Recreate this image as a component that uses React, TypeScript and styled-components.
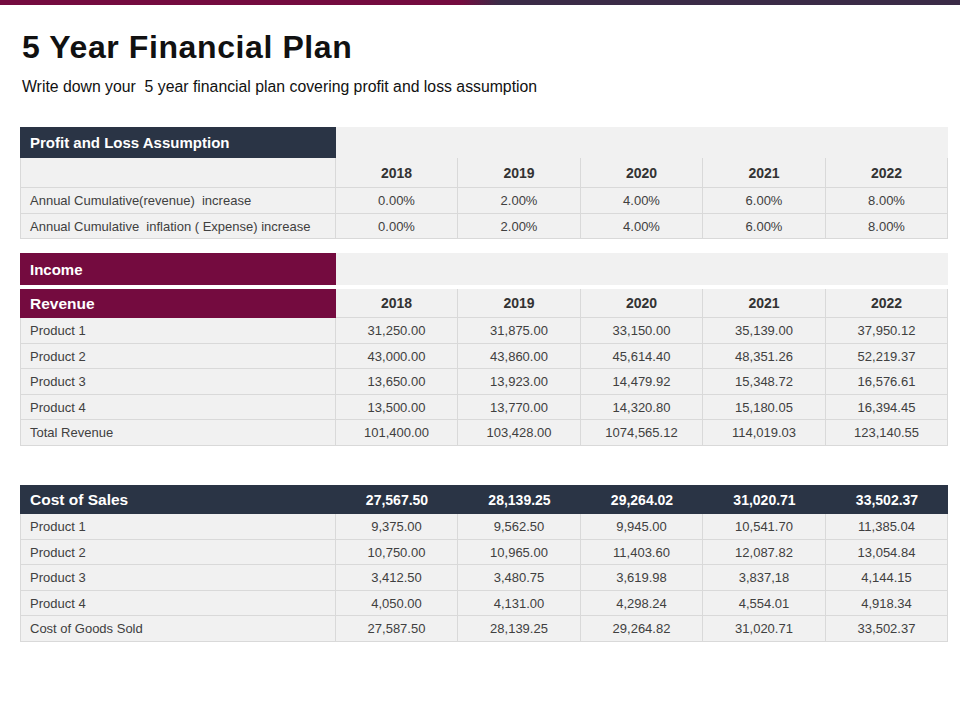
import React from "react";
import styled, {createGlobalStyle} from "styled-components";

const GlobalStyle = createGlobalStyle`
  html, body {
    margin: 0;
    padding: 0;
    background: #ffffff;
  }
  body {
    font-family: "Liberation Sans", Arial, sans-serif;
  }
`;

const MAROON = "#740b3f";
const NAVY = "#2a3445";
const CELL = "#f1f1f1";
const LINE = "#d9d9d9";

const Page = styled.div`
  width: 960px;
  height: 720px;
  overflow: hidden;
  background: #fff;
`;

const TopBar = styled.div`
  height: 5px;
  background: linear-gradient(90deg, ${MAROON} 0%, ${MAROON} 48%, #3b2b47 52%, #3b2b47 100%);
`;

const Content = styled.div`
  padding: 0 12px 0 20px;
`;

const Title = styled.h1`
  margin: 24px 0 0 2px;
  font-family: "Liberation Sans", Arial, sans-serif;
  font-weight: 700;
  font-size: 32px;
  line-height: 36px;
  color: #111;
  letter-spacing: 0.6px;
`;

const Subtitle = styled.p`
  margin: 13px 0 0 2px;
  font-size: 15.8px;
  line-height: 18px;
  color: #111;
  white-space: pre;
`;

const Table = styled.div<{ $top: number }>`
  margin-top: ${p => p.$top}px;
  display: grid;
  grid-template-columns: 316px 122px 123px 122px 123px 122px;
  width: 928px;
`;

const Cell = styled.div<{ $h: number; $bold?: boolean; $left?: boolean }>`
  height: ${p => p.$h}px;
  box-sizing: border-box;
  background: ${CELL};
  border-right: 1px solid ${LINE};
  border-bottom: 1px solid ${LINE};
  border-left: ${p => (p.$left ? `1px solid ${LINE}` : "none")};
  display: flex;
  align-items: center;
  justify-content: ${p => (p.$left ? "flex-start" : "center")};
  padding-left: ${p => (p.$left ? "9px" : "0")};
  font-size: ${p => (p.$bold ? "14px" : "13px")};
  font-weight: ${p => (p.$bold ? 700 : 400)};
  color: ${p => (p.$bold ? "#333" : "#404040")};
  white-space: pre;
`;

const Banner = styled.div<{ $bg: string; $h: number; $size?: number; $center?: boolean }>`
  height: ${p => p.$h}px;
  box-sizing: border-box;
  background: ${p => p.$bg};
  color: #fff;
  font-weight: 700;
  font-size: ${p => p.$size ?? 15}px;
  display: flex;
  align-items: center;
  justify-content: ${p => (p.$center ? "center" : "flex-start")};
  padding-left: ${p => (p.$center ? "0" : "10px")};
`;

const Filler = styled.div<{ $h: number }>`
  grid-column: span 5;
  height: ${p => p.$h}px;
  background: ${CELL};
`;

const Gap = styled.div`
  grid-column: 1 / -1;
  height: 4px;
  background: #fff;
`;

const years = ["2018", "2019", "2020", "2021", "2022"];

type Row = { label: string; values: string[] };

const assumptions: Row[] = [
    {label: "Annual Cumulative(revenue)  increase", values: ["0.00%", "2.00%", "4.00%", "6.00%", "8.00%"]},
    {label: "Annual Cumulative  inflation ( Expense) increase", values: ["0.00%", "2.00%", "4.00%", "6.00%", "8.00%"]},
];

const revenue: Row[] = [
    {label: "Product 1", values: ["31,250.00", "31,875.00", "33,150.00", "35,139.00", "37,950.12"]},
    {label: "Product 2", values: ["43,000.00", "43,860.00", "45,614.40", "48,351.26", "52,219.37"]},
    {label: "Product 3", values: ["13,650.00", "13,923.00", "14,479.92", "15,348.72", "16,576.61"]},
    {label: "Product 4", values: ["13,500.00", "13,770.00", "14,320.80", "15,180.05", "16,394.45"]},
    {label: "Total Revenue", values: ["101,400.00", "103,428.00", "1074,565.12", "114,019.03", "123,140.55"]},
];

const costTotals = ["27,567.50", "28,139.25", "29,264.02", "31,020.71", "33,502.37"];

const costs: Row[] = [
    {label: "Product 1", values: ["9,375.00", "9,562.50", "9,945.00", "10,541.70", "11,385.04"]},
    {label: "Product 2", values: ["10,750.00", "10,965.00", "11,403.60", "12,087.82", "13,054.84"]},
    {label: "Product 3", values: ["3,412.50", "3,480.75", "3,619.98", "3,837,18", "4,144.15"]},
    {label: "Product 4", values: ["4,050.00", "4,131.00", "4,298.24", "4,554.01", "4,918.34"]},
    {label: "Cost of Goods Sold", values: ["27,587.50", "28,139.25", "29,264.82", "31,020.71", "33,502.37"]},
];

const rowHeight = (i: number) => (i % 2 === 0 ? 26 : 25);

function DataRows(props: { rows: Row[] }) {
    return (
        <>
            {props.rows.map((r, n) => (
                <React.Fragment key={r.label}>
                    <Cell $h={rowHeight(n)} $left>{r.label}</Cell>
                    {r.values.map((v, i) => (
                        <Cell key={i} $h={rowHeight(n)}>{v}</Cell>
                    ))}
                </React.Fragment>
            ))}
        </>
    );
}

export default function App() {
    return (
        <Page>
            <GlobalStyle/>
            <TopBar/>
            <Content>
                <Title>5 Year Financial Plan</Title>
                <Subtitle>Write down your  5 year financial plan covering profit and loss assumption</Subtitle>

                <Table $top={31}>
                    <Banner $bg={NAVY} $h={31}>Profit and Loss Assumption</Banner>
                    <Filler $h={31}/>
                    <Cell $h={30} $left/>
                    {years.map(y => <Cell key={y} $h={30} $bold>{y}</Cell>)}
                    <DataRows rows={assumptions}/>
                </Table>

                <Table $top={14}>
                    <Banner $bg={MAROON} $h={32}>Income</Banner>
                    <Filler $h={32}/>
                    <Gap/>
                    <Banner $bg={MAROON} $h={29} $size={15.5}>Revenue</Banner>
                    {years.map(y => <Cell key={y} $h={29} $bold>{y}</Cell>)}
                    <DataRows rows={revenue}/>
                </Table>

                <Table $top={39}>
                    <Banner $bg={NAVY} $h={29} $size={15.5}>Cost of Sales</Banner>
                    {costTotals.map(v => <Banner key={v} $bg={NAVY} $h={29} $size={14} $center>{v}</Banner>)}
                    <DataRows rows={costs}/>
                </Table>
            </Content>
        </Page>
    );
}
